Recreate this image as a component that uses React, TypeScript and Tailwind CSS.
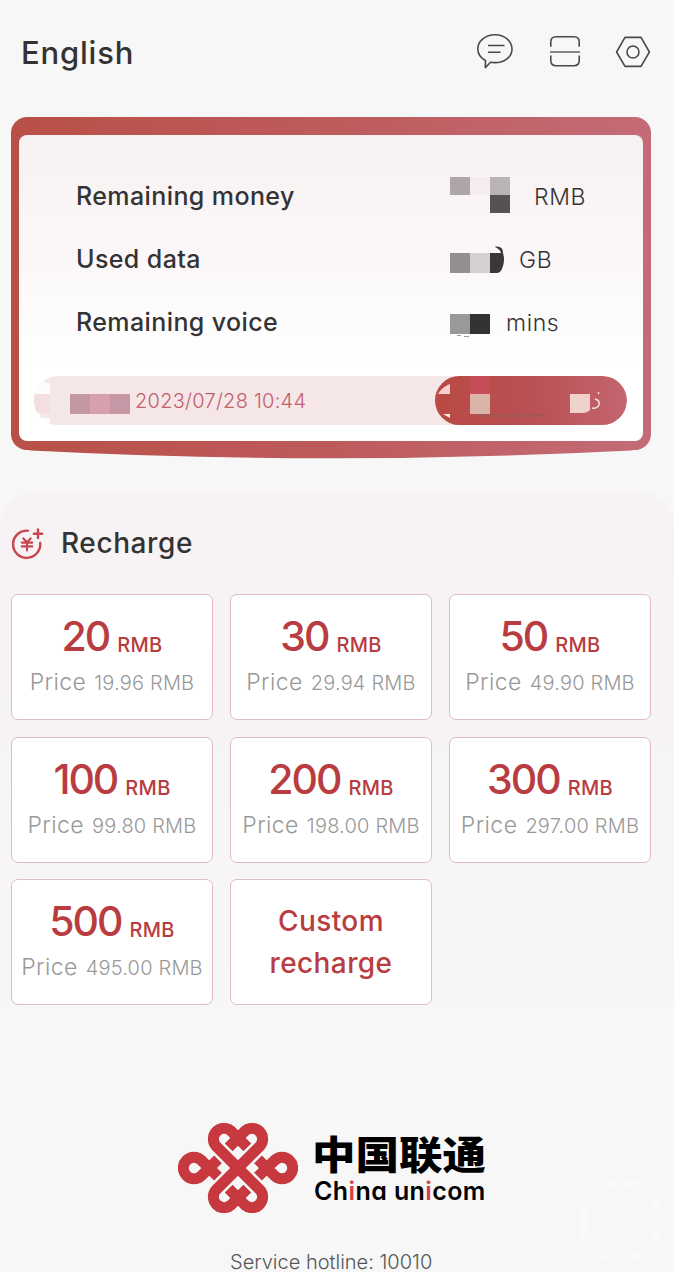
import React from 'react';

interface Plan {
  amount: string;
  price: string;
}

const PLANS: Plan[] = [
  { amount: '20', price: '19.96' },
  { amount: '30', price: '29.94' },
  { amount: '50', price: '49.90' },
  { amount: '100', price: '99.80' },
  { amount: '200', price: '198.00' },
  { amount: '300', price: '297.00' },
  { amount: '500', price: '495.00' },
];

function ChatIcon() {
  return (
    <svg width="38" height="36" viewBox="0 0 38 36" fill="none" stroke="#4a4a4a" strokeWidth="1.6" strokeLinejoin="round">
      <path d="M9.5 27.5 C4.5 24.8 1.8 20.8 1.8 16 C1.8 8 9.5 1.8 19 1.8 C28.5 1.8 36 8 36 16 C36 24 28.5 29.6 19 29.6 C17.5 29.6 16 29.5 14.6 29.2 L9.3 34.6 Z" />
      <path d="M12 12.5 H28.5 M12 19.2 H24.5" />
    </svg>
  );
}

function ScanIcon() {
  return (
    <svg width="32" height="32" viewBox="0 0 32 32" fill="none" stroke="#4a4a4a" strokeWidth="1.6">
      <path d="M1.8 11.8 V7 Q1.8 1.8 7 1.8 H25 Q30.2 1.8 30.2 7 V11.8" />
      <path d="M1.8 20.5 V25.5 Q1.8 30.7 7 30.7 H25 Q30.2 30.7 30.2 25.5 V20.5" />
      <path d="M1 17 H31" stroke="#777" strokeWidth="1.8" />
    </svg>
  );
}

function HexIcon() {
  return (
    <svg width="36" height="32" viewBox="0 0 36 32" fill="none" stroke="#4a4a4a" strokeWidth="1.6" strokeLinejoin="round">
      <path d="M10 1.4 H26 L34.4 16 L26 30.4 H10 L1.6 16 Z" />
      <circle cx="18" cy="16" r="6" />
    </svg>
  );
}

function RechargeIcon() {
  return (
    <svg width="34" height="34" viewBox="0 0 34 34" fill="none" stroke="#c8474d" strokeWidth="2.4" strokeLinecap="round">
      <path d="M17 4.700 A13.6 13.6 0 1 0 29.2 17" />
      <path d="M27 3.5 V12 M22.8 7.8 H31.2" />
      <path d="M12.4 12.4 L16 16.2 L19.6 12.4 M10.8 16.6 H21.200 M10.8 20.4 H21.2 M16 16.4 V24.4" strokeWidth="2.200" />
    </svg>
  );
}

function KnotLogo() {
  return (
    <svg width="120" height="90" viewBox="53 70 360 270" fill="none" stroke="#c7393e" strokeWidth="33">
      {/* two long strands crossing in the middle */}
      <path d="M261 143 L212.6 94.4 A32 32 0 0 0 167.4 139.6 L298.6 270.4 A32 32 0 0 1 253.4 315.6 L205 267" />
      <path d="M205 143 L253.4 94.4 A32 32 0 0 1 298.6 139.6 L167.4 270.4 A32 32 0 0 0 212.6 315.6 L261 267" />
      {/* side loops */}
      <path d="M173 231 L123.6 182.4 A32 32 0 1 0 123.6 227.6 L173 179" />
      <path d="M293 231 L342.4 182.4 A32 32 0 1 1 342.4 227.6 L293 179" />
    </svg>
  );
}

function InfoRow({ label, unit, className, children }: { label: string; unit: string; className: string; children: React.ReactNode }) {
  return (
    <div className={`flex items-center pl-[57px] ${className}`}>
      <span className="w-[374px] text-[25px] leading-[36px] font-medium tracking-[0.4px]">{label}</span>
      {children}
      <span className="pt-[2px] text-[23px] leading-[36px] font-[350] tracking-[0.6px]">{unit}</span>
    </div>
  );
}

function BalanceCard() {
  return (
    <section className="relative ml-[11px] mt-[37px] h-[333px] w-[640px] shrink-0 rounded-2xl bg-linear-to-r from-[#b85047] via-[#bd5b5c] to-[#c46b77] px-2 pt-[18px]">
      {/* curved bottom lip */}
      <svg className="absolute left-0 top-[332px]" width="640" height="10" viewBox="0 0 640 10">
        <defs>
          <linearGradient id="lip" gradientUnits="userSpaceOnUse" x1="0" x2="640" y1="0" y2="0">
            <stop offset="0" stopColor="#b85047" />
            <stop offset="0.5" stopColor="#bd5b5c" />
            <stop offset="1" stopColor="#c46b77" />
          </linearGradient>
        </defs>
        <path d="M12 0 H628 L620 1.4 Q320 17 20 1.4 Z" fill="url(#lip)" />
      </svg>
      <div className="h-[306px] rounded-lg bg-linear-to-b from-[#f8f1f1] via-[#fbf7f9] via-40% to-white to-75% pt-[42px] text-[#333]">
        <InfoRow label="Remaining money" unit="RMB" className="h-[38px]">
          <svg width="84" height="38" viewBox="450 176 84 38" shapeRendering="crispEdges">
            <path d="M450 176 H470 V194 H450 Z" fill="#aea5a8" />
            <path d="M470 176 H490 V194 H470 Z" fill="#f6ecef" />
            <path d="M490 176 H510 V194 H490 Z" fill="#bab3b5" />
            <path d="M490 194 H510 V212 H490 Z" fill="#575252" />
          </svg>
        </InfoRow>
        <InfoRow label="Used data" unit="GB" className="mt-[25px] h-[38px]">
          <svg width="69" height="38" viewBox="450 241 69 38">
            <path d="M450 254 H470 V274 H450 Z" fill="#938e90" />
            <path d="M470 254 H490 V274 H470 Z" fill="#d5d1d3" />
            <path d="M490 254 H501 Q500 250 494.5 247.8 Q503 246.5 503 254 Q505.5 262 502 270 Q500 274 497 274 H490 Z" fill="#3b3638" />
          </svg>
        </InfoRow>
        <InfoRow label="Remaining voice" unit="mins" className="mt-[25px] h-[38px]">
          <svg width="56" height="38" viewBox="450 303 56 38" shapeRendering="crispEdges">
            <path d="M450 314 H470 V334 H450 Z" fill="#999" />
            <path d="M470 314 H490 V334 H470 Z" fill="#333" />
            <path d="M457 335 h4 v1 h-4 Z M464 336 h5 v1 h-5 Z" fill="#999" />
          </svg>
        </InfoRow>
        <div className="ml-[15px] mt-[35px] flex h-[49px] w-[593px] items-center justify-between overflow-hidden rounded-full bg-[#f5e6e7]">
          <svg width="101" height="49" viewBox="34 376 101 49" shapeRendering="crispEdges">
            <path d="M34 376 H44 V383 H50 V394 H34 Z M34 413 H40 V418 H50 V425 H34 Z" fill="#fff" fillOpacity="0.85" />
            <path d="M34 394 H50 V413 H34 Z" fill="#f3dfe2" />
            <path d="M70 394 H90 V414 H70 Z" fill="#c498a3" />
            <path d="M90 394 H110 V414 H90 Z" fill="#d8a0ad" />
            <path d="M110 394 H130 V414 H110 Z" fill="#c698a6" />
          </svg>
          <span className="flex-1 pt-px text-[20px] font-[350] tracking-[0.25px] text-[#c25e6c]">2023/07/28 10:44</span>
          <div className="h-[49px] w-[192px] overflow-hidden rounded-full bg-linear-to-r from-[#b94a42] via-[#b95055] to-[#c4656f]">
            <svg width="192" height="49" viewBox="435 376 192 49">
              <path d="M438 394 Q442 387 450 384 V394 Z" fill="#f6cfcd" />
              <path d="M443 414 H450 V418 Z" fill="#fbe9e8" />
              <path d="M470 376 H490 V394 H470 Z" fill="#c64c57" />
              <path d="M470 394 H490 V414 H470 Z" fill="#dab4a9" />
              <path d="M475 414 H545 V417 H475 Z" fill="#a75654" />
              <path d="M570 394 H590 V410 Q587 413 582 413 H570 Z" fill="#f0d2cc" />
              <path d="M598.5 392 V394 M595 399 Q600 400 599 405 Q597 409 592 408" fill="none" stroke="#f6d9d9" strokeWidth="1.6" />
            </svg>
          </div>
        </div>
      </div>
    </section>
  );
}

function PlanCard({ amount, price }: Plan) {
  return (
    <button className="flex flex-col items-center rounded-[7px] border border-[#e2bac2] bg-white pt-4 whitespace-nowrap">
      <span className="flex items-baseline text-[#b83c40]">
        <span className="text-[41px] leading-[50px] font-medium tracking-[-2px]">{amount}</span>
        <span className="relative top-px ml-2 text-[20px] font-medium tracking-[0.3px]">RMB</span>
      </span>
      <span className="mt-[6px] flex items-baseline font-[350] text-[#999]">
        <span className="text-[23px] leading-[30px] tracking-[0.4px]">Price</span>
        <span className="ml-2 text-[20px] tracking-[0.2px]">{price} RMB</span>
      </span>
    </button>
  );
}

export default function App() {
  return (
    <div className="h-[1272px] w-[684px] overflow-hidden bg-white font-[Inter,'Noto_Sans_CJK_SC',sans-serif]">
      <div className="relative flex h-full w-[674px] flex-col bg-[#f7f7f7]">
        <header className="flex h-20 shrink-0 items-start pl-[21px] pr-[23px] pt-[33px] text-[#333]">
          <h1 className="flex-1 text-[31px] leading-[40px] font-medium tracking-[0.8px]">English</h1>
          <div className="flex items-start">
            <ChatIcon />
            <div className="ml-[35px] mt-[2px]"><ScanIcon /></div>
            <div className="ml-[34px] mt-[3px]"><HexIcon /></div>
          </div>
        </header>

        <BalanceCard />

        <main className="mt-[41px] h-[515px] shrink-0 rounded-t-[36px] bg-linear-to-b from-[#f7f3f4] via-[#f7f4f5] to-[#f7f7f7] px-[11px] pt-[34px]">
          <div className="flex h-[36px] items-center">
            <RechargeIcon />
            <h2 className="ml-4 text-[28px] leading-[36px] font-medium tracking-[0.6px] text-[#333]">Recharge</h2>
          </div>
          <div className="mt-[33px] grid w-[640px] auto-rows-[126px] grid-cols-3 gap-x-[17px] gap-y-[16.5px]">
            {PLANS.map(plan => (
              <PlanCard key={plan.amount} {...plan} />
            ))}
            <button className="rounded-[7px] border border-[#e2bac2] bg-white text-[28px] leading-[42px] font-medium tracking-[0.4px] text-[#b83c40]">
              Custom<br />recharge
            </button>
          </div>
        </main>

        <footer className="mt-[117px] flex shrink-0 flex-col items-start">
          <div className="ml-[178px] flex">
            <KnotLogo />
            <div className="ml-4 text-black">
              <div className="-ml-0.5 origin-bottom scale-y-90 pt-[2px] text-[43.5px] leading-[54px] font-black">中国联通</div>
              <div className="text-[25px] leading-[25px] font-semibold tracking-[0.4px] whitespace-nowrap [font-feature-settings:'cv11']">
                Ch<span className="text-[#d8404c]">i</span>na un<span className="text-[#d8404c]">i</span>com
              </div>
            </div>
          </div>
          <p className="ml-[230px] mt-[40px] text-[20px] leading-[18px] font-light whitespace-nowrap text-[#555]">Service hotline: 10010</p>
        </footer>

        {/* faint round stamp in the corner */}
        <div className="absolute left-[579px] top-[1178px] h-[86px] w-[84px] rounded-full border-8 border-white/30" />
      </div>
    </div>
  );
}
